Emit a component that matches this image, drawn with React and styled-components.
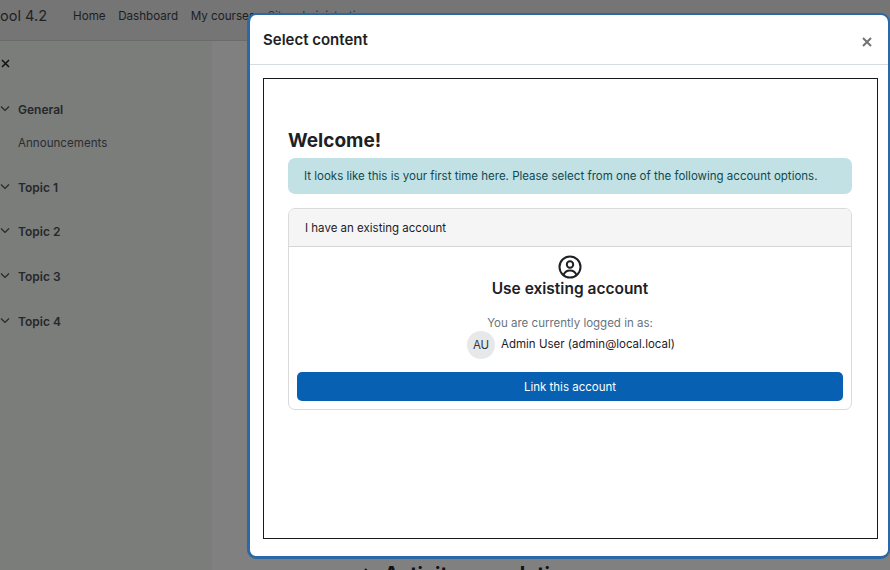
import React from "react";
import styled, { createGlobalStyle } from "styled-components";

const Global = createGlobalStyle`
  html, body { margin: 0; padding: 0; width: 890px; height: 570px; overflow: hidden; background: #808080; }
  body { font-family: Inter, "Liberation Sans", sans-serif; color: #1d2125; }
  * { box-sizing: border-box; }
`;

const Page = styled.div`
  position: relative;
  width: 890px;
  height: 570px;
  overflow: hidden;
  display: flex;
  flex-direction: column;
`;
const Navbar = styled.header`
  height: 41px;
  flex: none;
  background: #757575;
  border-bottom: 1px solid #6a6c6c;
  display: flex;
  align-items: center;
  overflow: hidden;
  color: #1f2224;
  padding-bottom: 9px;
`;
const Brand = styled.div`
  font-size: 14.5px;
  width: 47px;
  margin-right: 26px;
  display: flex;
  justify-content: flex-end;
  white-space: nowrap;
  flex: none;
`;
const NavItem = styled.span`
  font-size: 11.65px;
  margin-right: 12.5px;
  white-space: nowrap;
  color: #1c1f22;
  flex: none;
`;
const NavLink = styled(NavItem)`
  color: #0a3a64;
`;
const Content = styled.div`
  flex: 1;
  display: flex;
  min-height: 0;
`;
const Sidebar = styled.aside`
  width: 212px;
  flex: none;
  background: #7b7d7b;
  padding-top: 15px;
`;
const CloseSide = styled.div`
  height: 14px;
  margin-bottom: 32px;
  color: #111;
  display: flex;
  align-items: center;
  svg { display: block; margin-left: 1px; }
`;
const Section = styled.div`
  margin-bottom: ${(p) => p.$gap}px;
`;
const SectionTitle = styled.div`
  display: flex;
  align-items: center;
  font-size: 12px;
  font-weight: 600;
  line-height: 16px;
  color: #26282c;
  svg { flex: none; margin: -2px 7px 0 0; display: block; }
`;
const SubItem = styled.div`
  font-size: 11.6px;
  line-height: 16px;
  color: #2b2d31;
  padding-left: 18px;
  margin-top: 17px;
`;
const Main = styled.main`
  flex: 1;
  display: flex;
  flex-direction: column;
  justify-content: flex-end;
  padding-left: 150px;
`;
const ClippedHeading = styled.div`
  height: 7px;
  overflow: hidden;
  font-size: 20px;
  font-weight: 700;
  line-height: 22px;
  color: #111;
  display: flex;
  align-items: flex-start;
  gap: 10px;
  white-space: nowrap;
  svg { flex: none; margin-top: 4px; }
`;
const Modal = styled.div`
  position: absolute;
  left: 247px;
  top: 13px;
  width: 643px;
  height: 546px;
  background: #fff;
  border: 2px solid #2a69a6;
  border-left-width: 3px;
  border-bottom-width: 3px;
  border-radius: 9px;
  display: flex;
  flex-direction: column;
`;
const ModalHeader = styled.div`
  height: 50px;
  flex: none;
  border-bottom: 1px solid #d5dde3;
  display: flex;
  align-items: center;
  justify-content: space-between;
  padding: 0 13px;
`;
const ModalTitle = styled.h5`
  margin: 0;
  font-size: 15px;
  font-weight: 600;
  color: #1d2125;
`;
const CloseButton = styled.span`
  color: #737373;
  display: block;
  margin: 4px 3px 0 0;
  svg { display: block; }
`;
const ModalBody = styled.div`
  flex: 1;
  padding: 13px 10px 17px 13px;
  display: flex;
`;
const Frame = styled.div`
  flex: 1;
  border: 1px solid #1a1a1a;
  padding: 50px 25px 0 24px;
`;
const Heading = styled.h2`
  margin: 0 0 6px;
  font-size: 19px;
  line-height: 23px;
  font-weight: 700;
  color: #1d2125;
`;
const Alert = styled.div`
  height: 36px;
  background: #c2e1e4;
  border-radius: 7px;
  color: #0d4a52;
  font-size: 11.5px;
  display: flex;
  align-items: center;
  padding-left: 16px;
  margin-bottom: 14px;
  white-space: nowrap;
`;
const Card = styled.div`
  border: 1px solid #dadada;
  border-radius: 7px;
  overflow: hidden;
`;
const CardHeader = styled.div`
  height: 38px;
  background: #f5f5f5;
  border-bottom: 1px solid #d6d6d6;
  font-size: 11.5px;
  color: #1d2125;
  display: flex;
  align-items: center;
  padding-left: 16px;
`;
const CardBody = styled.div`
  padding: 8px;
  display: flex;
  flex-direction: column;
  align-items: center;
`;
const UserIcon = styled.svg`
  display: block;
  color: #1d2125;
`;
const CardTitle = styled.div`
  font-size: 15.5px;
  line-height: 18px;
  font-weight: 600;
  color: #1d2125;
  margin-top: 1px;
`;
const LoggedIn = styled.div`
  font-size: 11.5px;
  line-height: 14px;
  color: #6a737b;
  margin-top: 18px;
`;
const UserRow = styled.div`
  display: flex;
  align-items: flex-start;
  gap: 6px;
  margin-top: 1px;
  margin-left: 2px;
`;
const Avatar = styled.div`
  width: 28px;
  height: 28px;
  border-radius: 50%;
  background: #e6e8ea;
  display: flex;
  align-items: center;
  justify-content: center;
  font-size: 11.5px;
  color: #30343a;
`;
const UserName = styled.div`
  font-size: 11.5px;
  line-height: 14px;
  margin-top: 6px;
  color: #1d2125;
`;
const PrimaryButton = styled.button`
  width: 100%;
  height: 29px;
  margin-top: 13px;
  border: 0;
  border-radius: 5px;
  background: #0760b2;
  color: #fff;
  font: 400 11.5px Inter, "Liberation Sans", sans-serif;
`;

const Chevron = () => (
  <svg width="11" height="8" viewBox="0 0 11 8" fill="none" stroke="#26282c" strokeWidth="1.2">
    <path d="M1 1.5 L5 5.5 L9 1.5" />
  </svg>
);

const sections = [
  { name: "Topic 1", gap: 28 },
  { name: "Topic 2", gap: 29 },
  { name: "Topic 3", gap: 29 },
  { name: "Topic 4", gap: 0 },
];

export default function App() {
  return (
    <Page>
      <Global />
      <Navbar>
        <Brand>Moodle tool 4.2</Brand>
        <NavItem>Home</NavItem>
        <NavItem>Dashboard</NavItem>
        <NavItem>My courses</NavItem>
        <NavLink>Site administration</NavLink>
      </Navbar>
      <Content>
        <Sidebar>
          <CloseSide>
            <svg width="9" height="9" viewBox="0 0 9 9" stroke="#111" strokeWidth="1.5">
              <path d="M1 1 L8 8 M8 1 L1 8" />
            </svg>
          </CloseSide>
          <Section $gap={29}>
            <SectionTitle><Chevron />General</SectionTitle>
            <SubItem>Announcements</SubItem>
          </Section>
          {sections.map((s) => (
            <Section key={s.name} $gap={s.gap}>
              <SectionTitle><Chevron />{s.name}</SectionTitle>
            </Section>
          ))}
        </Sidebar>
        <Main>
          <ClippedHeading>
            <svg width="12" height="14" viewBox="0 0 12 14" fill="none" stroke="#111" strokeWidth="1.8">
              <path d="M3 2 L9 7 L3 12" />
            </svg>
            Activity completion
          </ClippedHeading>
        </Main>
      </Content>
      <Modal>
        <ModalHeader>
          <ModalTitle>Select content</ModalTitle>
          <CloseButton>
            <svg width="10" height="10" viewBox="0 0 10 10" stroke="currentColor" strokeWidth="2">
              <path d="M1 1 L9 9 M9 1 L1 9" />
            </svg>
          </CloseButton>
        </ModalHeader>
        <ModalBody>
          <Frame>
            <Heading>Welcome!</Heading>
            <Alert>It looks like this is your first time here. Please select from one of the following account options.</Alert>
            <Card>
              <CardHeader>I have an existing account</CardHeader>
              <CardBody>
                <UserIcon width="24" height="24" viewBox="0 0 24 24" fill="none" stroke="currentColor" strokeWidth="2">
                  <circle cx="12" cy="12" r="10.5" />
                  <circle cx="12" cy="9.5" r="3.2" />
                  <path d="M5.5 20 C7 16 9.5 15.5 12 15.5 C14.5 15.5 17 16 18.5 20" />
                </UserIcon>
                <CardTitle>Use existing account</CardTitle>
                <LoggedIn>You are currently logged in as:</LoggedIn>
                <UserRow>
                  <Avatar>AU</Avatar>
                  <UserName>Admin User (admin@local.local)</UserName>
                </UserRow>
                <PrimaryButton>Link this account</PrimaryButton>
              </CardBody>
            </Card>
          </Frame>
        </ModalBody>
      </Modal>
    </Page>
  );
}
